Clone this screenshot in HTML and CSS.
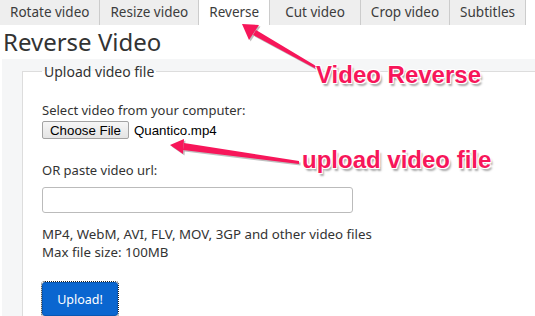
FILE: index.html
```html
<!DOCTYPE html>
<html lang="en">
<head>
  <meta charset="UTF-8" />
  <title>Reverse Video</title>
  <meta name="viewport" content="width=device-width, initial-scale=1.0" />
  <link rel="stylesheet" href="styles.css">
</head>
<body>
  <nav class="tabs">
    <a class="tab">Rotate video</a>
    <a class="tab">Resize video</a>
    <a class="tab active">Reverse</a>
    <a class="tab tab-wide">Cut video</a>
    <a class="tab">Crop video</a>
    <a class="tab">Subtitles</a>
  </nav>

  <h1 class="title">Reverse Video</h1>

  <div class="panel">
    <fieldset class="box">
      <legend>Upload video file</legend>

      <div class="field">
        <label>Select video from your computer:</label>
        <div class="file-row">
          <button type="button" class="choose">Choose File</button>
          <span class="file-name">Quantico.mp4</span>
        </div>
      </div>

      <div class="field field-url">
        <label>OR paste video url:</label>
        <input type="text" class="url" />
      </div>

      <p class="hint">MP4, WebM, AVI, FLV, MOV, 3GP and other video files<br>Max file size: 100MB</p>

      <button type="submit" class="upload">Upload!</button>
    </fieldset>
  </div>

  <!-- screenshot annotations -->
  <svg class="marks" width="535" height="316" viewBox="0 0 535 316">
    <g class="shadow" transform="translate(1.5 1.5)">
      <polygon points="316,66 318,70 253,35 256,30" />
      <polygon points="242,24 259,25 249,40" />
      <polygon points="299,161 299,164 183,150 184,143" />
      <polygon points="170,145 184,139 183,154" />
    </g>
    <g class="arrow">
      <polygon points="316,66 318,70 253,35 256,30" />
      <polygon points="242,24 259,25 249,40" />
      <polygon points="299,161 299,164 183,150 184,143" />
      <polygon points="170,145 184,139 183,154" />
    </g>
  </svg>
  <div class="note note-reverse">Video Reverse</div>
  <div class="note note-upload">upload video file</div>
</body>
</html>
```

FILE: styles.css
```css
body {
  margin: 0;
  font-family: "Noto Sans", Arial, sans-serif;
  color: #333;
  background-color: #fff;
  position: relative;
  height: 316px;
  overflow: hidden;
}
.tabs {
  display: flex;
  height: 25px;
}
.tab {
  display: block;
  padding: 0 10px;
  line-height: 25px;
  font-size: 13.5px;
  color: #3c3c3c;
  background-color: #eee;
  border-right: 1px solid #ccc;
}
.tab-wide {
  padding: 0 15px;
}
.tab.active {
  background-color: #fff;
}
.title {
  margin: 0;
  padding: 1px 0 0 3px;
  height: 33px;
  font-size: 24px;
  font-weight: normal;
  line-height: 31px;
  color: #333;
}
.panel {
  box-sizing: border-box;
  margin-left: 2px;
  padding: 3px 0 0 20px;
  background-color: #f5f6f7;
  height: 257px;
  overflow: hidden;
}
.box {
  margin: 0;
  padding: 20px 20px 0 19px;
  border: 1px solid #ddd;
  border-right: none;
  background-color: #fff;
  height: 300px;
}
.box legend {
  padding: 0 2px;
  font-size: 14px;
  color: #333;
}
.field {
  margin-bottom: 22px;
}
.field-url {
  margin-bottom: 12px;
}
.field label {
  display: block;
  font-size: 13px;
  line-height: 18px;
  margin-bottom: 2px;
}
.file-row {
  display: flex;
  align-items: center;
}
.choose {
  height: 18px;
  padding: 0 7px;
  font-family: "Liberation Sans", Arial, sans-serif;
  font-size: 13.3px;
  color: #000;
  background: linear-gradient(#f6f6f6, #e4e4e4);
  border: 1px solid #a3a3a3;
  border-radius: 2px;
}
.file-name {
  margin-left: 5px;
  font-family: "Liberation Sans", Arial, sans-serif;
  font-size: 13.3px;
  color: #000;
}
.url {
  display: block;
  margin-top: 8px;
  width: 311px;
  height: 26px;
  box-sizing: border-box;
  border: 1px solid #bbb;
  border-radius: 3px;
}
.hint {
  margin: 0 0 21px;
  font-size: 13.3px;
  line-height: 18px;
}
.upload {
  width: 76px;
  height: 34px;
  font-family: "Noto Sans", Arial, sans-serif;
  font-size: 12.5px;
  color: #fff;
  background-color: #0a66d0;
  border: 1px solid #0857b3;
  border-radius: 3px;
  outline: 1px dotted #222;
}
.marks {
  position: absolute;
  top: 0;
  left: 0;
  pointer-events: none;
}
.arrow polygon {
  fill: #f7165a;
}
.shadow polygon {
  fill: rgba(0, 0, 0, 0.25);
}
.note {
  position: absolute;
  font-family: "Liberation Sans", Arial, sans-serif;
  font-weight: bold;
  font-size: 24px;
  color: #f7165a;
  white-space: nowrap;
  text-shadow: -1px -1px 0 #fff, 1px -1px 0 #fff, -1px 1px 0 #fff, 1px 1px 0 #fff,
    2px 3px 2px rgba(0, 0, 0, 0.35);
}
.note-reverse {
  left: 316px;
  top: 61px;
}
.note-upload {
  left: 302px;
  top: 146px;
}
```
